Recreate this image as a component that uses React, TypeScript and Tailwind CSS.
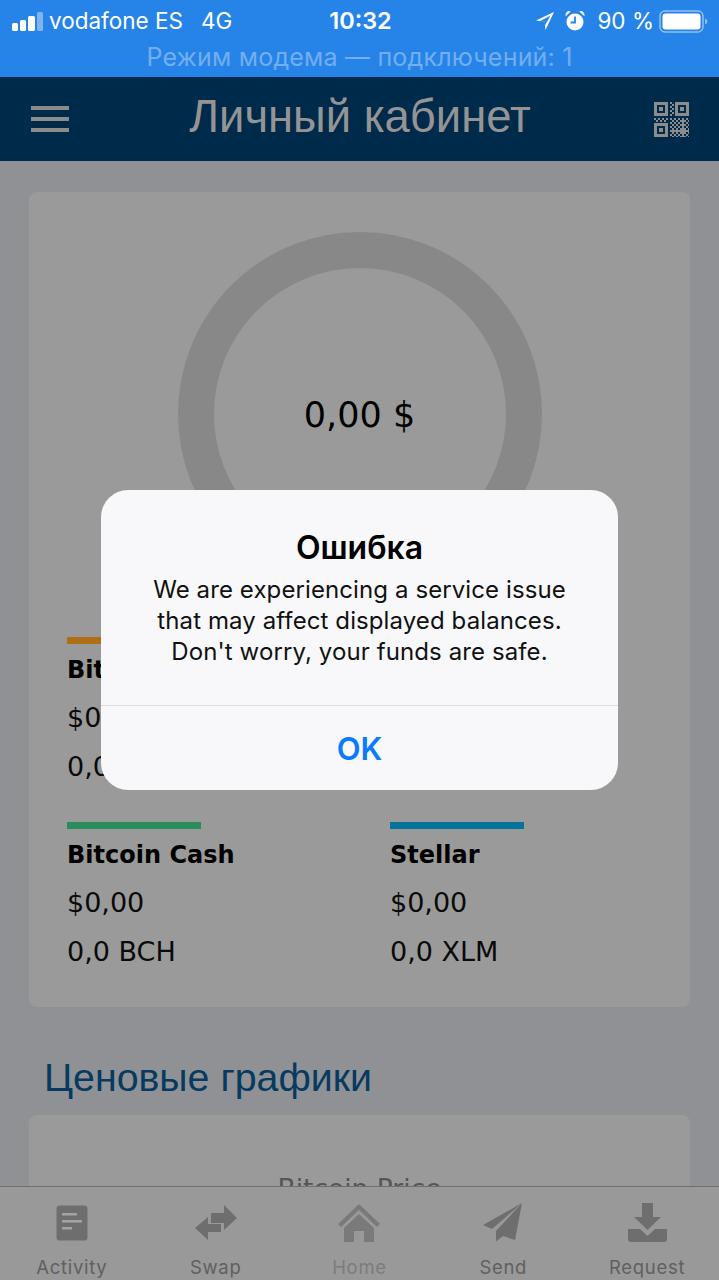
import React from "react";

const sf = "[font-family:Inter,'Noto_Sans',sans-serif]";
const wide = "[font-family:'DejaVu_Sans',sans-serif]";

function Signal() {
  return (
    <svg width="31" height="19" viewBox="0 0 31 19" className="block">
      <rect x="0" y="11" width="6" height="8" rx="1.5" fill="#fff" />
      <rect x="8" y="8" width="6" height="11" rx="1.5" fill="#fff" />
      <rect x="16" y="4" width="7" height="15" rx="1.5" fill="#fff" />
      <rect x="25" y="0" width="6" height="19" rx="1.5" fill="#7fb4f0" />
    </svg>
  );
}

function Location() {
  return (
    <svg width="20" height="20" viewBox="0 0 20 20" className="block">
      <path d="M19 1 L1 9.5 L9.6 10.4 L10.5 19 Z M15.5 4.5 L9.9 14.6 L9.7 10.3 L5.4 10.1 Z" fill="#fff" fillRule="evenodd" />
    </svg>
  );
}

function Alarm() {
  return (
    <svg width="20" height="22" viewBox="0 0 20 22" className="block">
      <circle cx="10" cy="12" r="8.5" fill="#fff" />
      <path d="M10 6.5V12.5H5.5" stroke="#2684e8" strokeWidth="1.8" fill="none" />
      <path d="M1 5.5 L5 1.5 Q1.2 0.8 1 5.5Z M19 5.5 L15 1.5 Q18.8 0.8 19 5.5Z" fill="#fff" stroke="#fff" />
    </svg>
  );
}

function Battery() {
  return (
    <svg width="49" height="23" viewBox="0 0 49 23" className="block">
      <rect x="1" y="1" width="43" height="21" rx="5" fill="none" stroke="#8fc0f4" strokeWidth="1.5" />
      <rect x="3.5" y="3.5" width="38" height="16" rx="3" fill="#fff" />
      <path d="M46 8.5 Q48.5 9.5 48.5 11.5 Q48.5 13.5 46 14.5Z" fill="#8fc0f4" />
    </svg>
  );
}

function Qr() {
  const c = "#8c8c8c";
  const dots: React.ReactNode[] = [];
  const cells = [
    [16, 0], [18, 2], [16, 4], [18, 6], [16, 8], [18, 10], [16, 12],
    [0, 16], [4, 16], [8, 16], [12, 16], [2, 18], [6, 18], [10, 18],
  ];
  cells.forEach(([x, y], i) => dots.push(<rect key={i} x={x} y={y} width="2" height="2" fill={c} />));
  for (let y = 16; y < 36; y += 2) {
    for (let x = 16; x < 36; x += 2) {
      if ((x + y) % 4 === 0 || (x * y) % 7 === 0) {
        dots.push(<rect key={`${x}-${y}`} x={x} y={y} width="2" height="2" fill={c} />);
      }
    }
  }
  return (
    <svg width="35" height="35" viewBox="0 0 35 35" className="block">
      <path d="M0 0H14V14H0Z M3 3V11H11V3Z" fill={c} fillRule="evenodd" />
      <rect x="5" y="5" width="4" height="4" fill={c} />
      <path d="M21 0H35V14H21Z M24 3V11H32V3Z" fill={c} fillRule="evenodd" />
      <rect x="26" y="5" width="4" height="4" fill={c} />
      <path d="M0 21H14V35H0Z M3 24V32H11V24Z" fill={c} fillRule="evenodd" />
      <rect x="5" y="26" width="4" height="4" fill={c} />
      {dots}
    </svg>
  );
}

const ICON = "#6e6e6e";

function ActivityIcon() {
  return (
    <svg width="32" height="36" viewBox="0 0 32 36">
      <rect x="0.5" y="0.5" width="31" height="35" rx="3" fill={ICON} />
      <rect x="6" y="8" width="15" height="2.5" fill="#a3a3a3" />
      <rect x="6" y="15" width="20" height="2.5" fill="#a3a3a3" />
      <rect x="6" y="22" width="10" height="2.5" fill="#a3a3a3" />
    </svg>
  );
}

function SwapIcon() {
  return (
    <svg width="44" height="36" viewBox="0 0 44 36">
      <path d="M30 0 L43 13 L30 25 V18 H17 V8 H30 Z" fill={ICON} />
      <path d="M14 12 V19 H27 V27 H14 V35 L1 23 Z" fill={ICON} />
    </svg>
  );
}

function HomeIcon() {
  return (
    <svg width="44" height="38" viewBox="0 0 44 38">
      <path d="M22 0 L43 20 L40 23 L22 6 L4 23 L1 20 Z" fill="#7a7a7a" />
      <path d="M22 10 L37 24 V38 H27 V27 H17 V38 H7 V24 Z" fill="#7a7a7a" />
    </svg>
  );
}

function SendIcon() {
  return (
    <svg width="40" height="39" viewBox="0 0 40 39">
      <path d="M39 0 L0 22 L9 26 L39 0 Z" fill={ICON} />
      <path d="M39 0 L13 28 L13 38.5 L20 33 L32 37 Z" fill={ICON} />
    </svg>
  );
}

function RequestIcon() {
  return (
    <svg width="39" height="39" viewBox="0 0 39 39">
      <path d="M14 0 H25 V14 H33 L19.5 27 L6 14 H14 Z" fill={ICON} />
      <path d="M0 26 H12 L19.5 33 L27 26 H39 V36 Q39 39 36 39 H3 Q0 39 0 36 Z" fill={ICON} />
    </svg>
  );
}

function Tab({ icon, label, dim }: { icon: React.ReactNode; label: string; dim?: boolean }) {
  return (
    <div className="flex flex-col items-center">
      <div className="h-[39px] flex items-center justify-center">{icon}</div>
      <div className={`mt-[14px] text-[18.5px] leading-[22px] tracking-[0.7px] ${sf} ${dim ? "text-[#7c7c7c]" : "text-[#606060]"}`}>
        {label}
      </div>
    </div>
  );
}

function Asset({ color, name, usd, amount }: { color: string; name: string; usd: string; amount: string }) {
  return (
    <div className="flex flex-col">
      <div className="h-[7px] w-[134px]" style={{ backgroundColor: color }} />
      <div className={`mt-[12px] text-[24px] leading-[28px] font-bold text-black whitespace-nowrap ${wide}`}>{name}</div>
      <div className={`mt-[19px] text-[27px] leading-[30px] text-[#0a0a0a] ${wide}`}>{usd}</div>
      <div className={`mt-[19px] text-[27px] leading-[30px] text-[#0a0a0a] ${wide}`}>{amount}</div>
    </div>
  );
}

export default function App() {
  return (
    <div className="relative w-[719px] h-[1280px] overflow-hidden flex flex-col bg-[#909194]">
      <div className={`h-[77px] shrink-0 bg-[#2684e8] flex flex-col ${sf}`}>
        <div className="h-[41px] relative flex items-center justify-between pl-[12px] pr-[11px] pt-[1px] text-white text-[22.5px]">
          <div className="flex items-center">
            <Signal />
            <span className="ml-[6px] whitespace-nowrap">vodafone ES</span>
            <span className="ml-[18px]">4G</span>
          </div>
          <span className="absolute left-0 right-0 text-center font-semibold text-[23.5px] pl-[2px]">10:32</span>
          <div className="flex items-center">
            <Location />
            <span className="ml-[10px]"><Alarm /></span>
            <span className="ml-[12px] mr-[5px] whitespace-nowrap">90 %</span>
            <Battery />
          </div>
        </div>
        <div className="text-center text-[25px] leading-[32px] text-[#72aef0] whitespace-nowrap tracking-[0.2px]">
          Режим модема — подключений: 1
        </div>
      </div>

      <div className="h-[84px] shrink-0 bg-[#002a4a] flex items-center justify-between pl-[31px] pr-[30px]">
        <div className="flex flex-col gap-[7px] w-[38px]">
          <div className="h-[4px] bg-[#8c8c8c]" />
          <div className="h-[4px] bg-[#8c8c8c]" />
          <div className="h-[4px] bg-[#8c8c8c]" />
        </div>
        <div className="text-[45.4px] leading-[48px] mb-[4px] text-[#949494] [font-family:'Liberation_Sans',sans-serif] mr-[3px]">Личный кабинет</div>
        <Qr />
      </div>

      <div className="flex-1 overflow-hidden px-[29px] pt-[31px]">
        <div className="h-[815px] rounded-[8px] bg-[#9a9a9a] flex flex-col items-center pt-[40px] pl-[38px] pr-[38px]">
          <div className="relative w-[364px] h-[364px] shrink-0 rounded-full border-[36px] border-[#888888] flex items-center justify-center">
            <span className={`text-[35px] text-black mt-[2px] ${wide}`}>0,00 $</span>
          </div>
          <div className="w-full grid grid-cols-[323px_1fr] mt-[41px] gap-y-[40px]">
            <Asset color="#b06f17" name="Bitcoin" usd="$0,00" amount="0,0 BTC" />
            <Asset color="#6a6a9a" name="Ethereum" usd="$0,00" amount="0,0 ETH" />
            <Asset color="#2b8c5e" name="Bitcoin Cash" usd="$0,00" amount="0,0 BCH" />
            <Asset color="#05739b" name="Stellar" usd="$0,00" amount="0,0 XLM" />
          </div>
        </div>
        <div className="mt-[46px] ml-[15px] text-[39.3px] leading-[48px] text-[#063a60] [font-family:'Liberation_Sans',sans-serif]">Ценовые графики</div>
        <div className="mt-[14px] h-[300px] rounded-[8px] bg-[#9a9a9a] pt-[59px] text-center text-[26.5px] leading-[30px] text-[#555] [font-family:'DejaVu_Sans',sans-serif]">
          Bitcoin Price
        </div>
      </div>

      <div className="h-[94px] shrink-0 bg-[#999999] border-t border-t-[#6f6f6f] grid grid-cols-5 pt-[16px]">
        <Tab icon={<ActivityIcon />} label="Activity" />
        <Tab icon={<SwapIcon />} label="Swap" />
        <Tab icon={<HomeIcon />} label="Home" dim />
        <Tab icon={<SendIcon />} label="Send" />
        <Tab icon={<RequestIcon />} label="Request" />
      </div>

      <div className="absolute left-[101px] top-[490px] w-[517px] h-[300px] rounded-[27px] bg-[#f8f8fa] flex flex-col items-center">
        <div className={`mt-[40px] text-[32px] leading-[36px] font-semibold text-black ${sf}`}>Ошибка</div>
        <div className={`mt-[8px] w-full text-center text-[24px] leading-[31px] tracking-[0.1px] text-[#111] ${sf}`}>
          <div>We are experiencing a service issue</div>
          <div>that may affect displayed balances.</div>
          <div>Don't worry, your funds are safe.</div>
        </div>
        <div className="mt-auto w-full h-[85px] border-t border-t-[#dcdce0] flex items-center justify-center">
          <span className={`text-[31px] font-semibold text-[#0a7aff] mt-[2px] ${sf}`}>OK</span>
        </div>
      </div>
    </div>
  );
}
